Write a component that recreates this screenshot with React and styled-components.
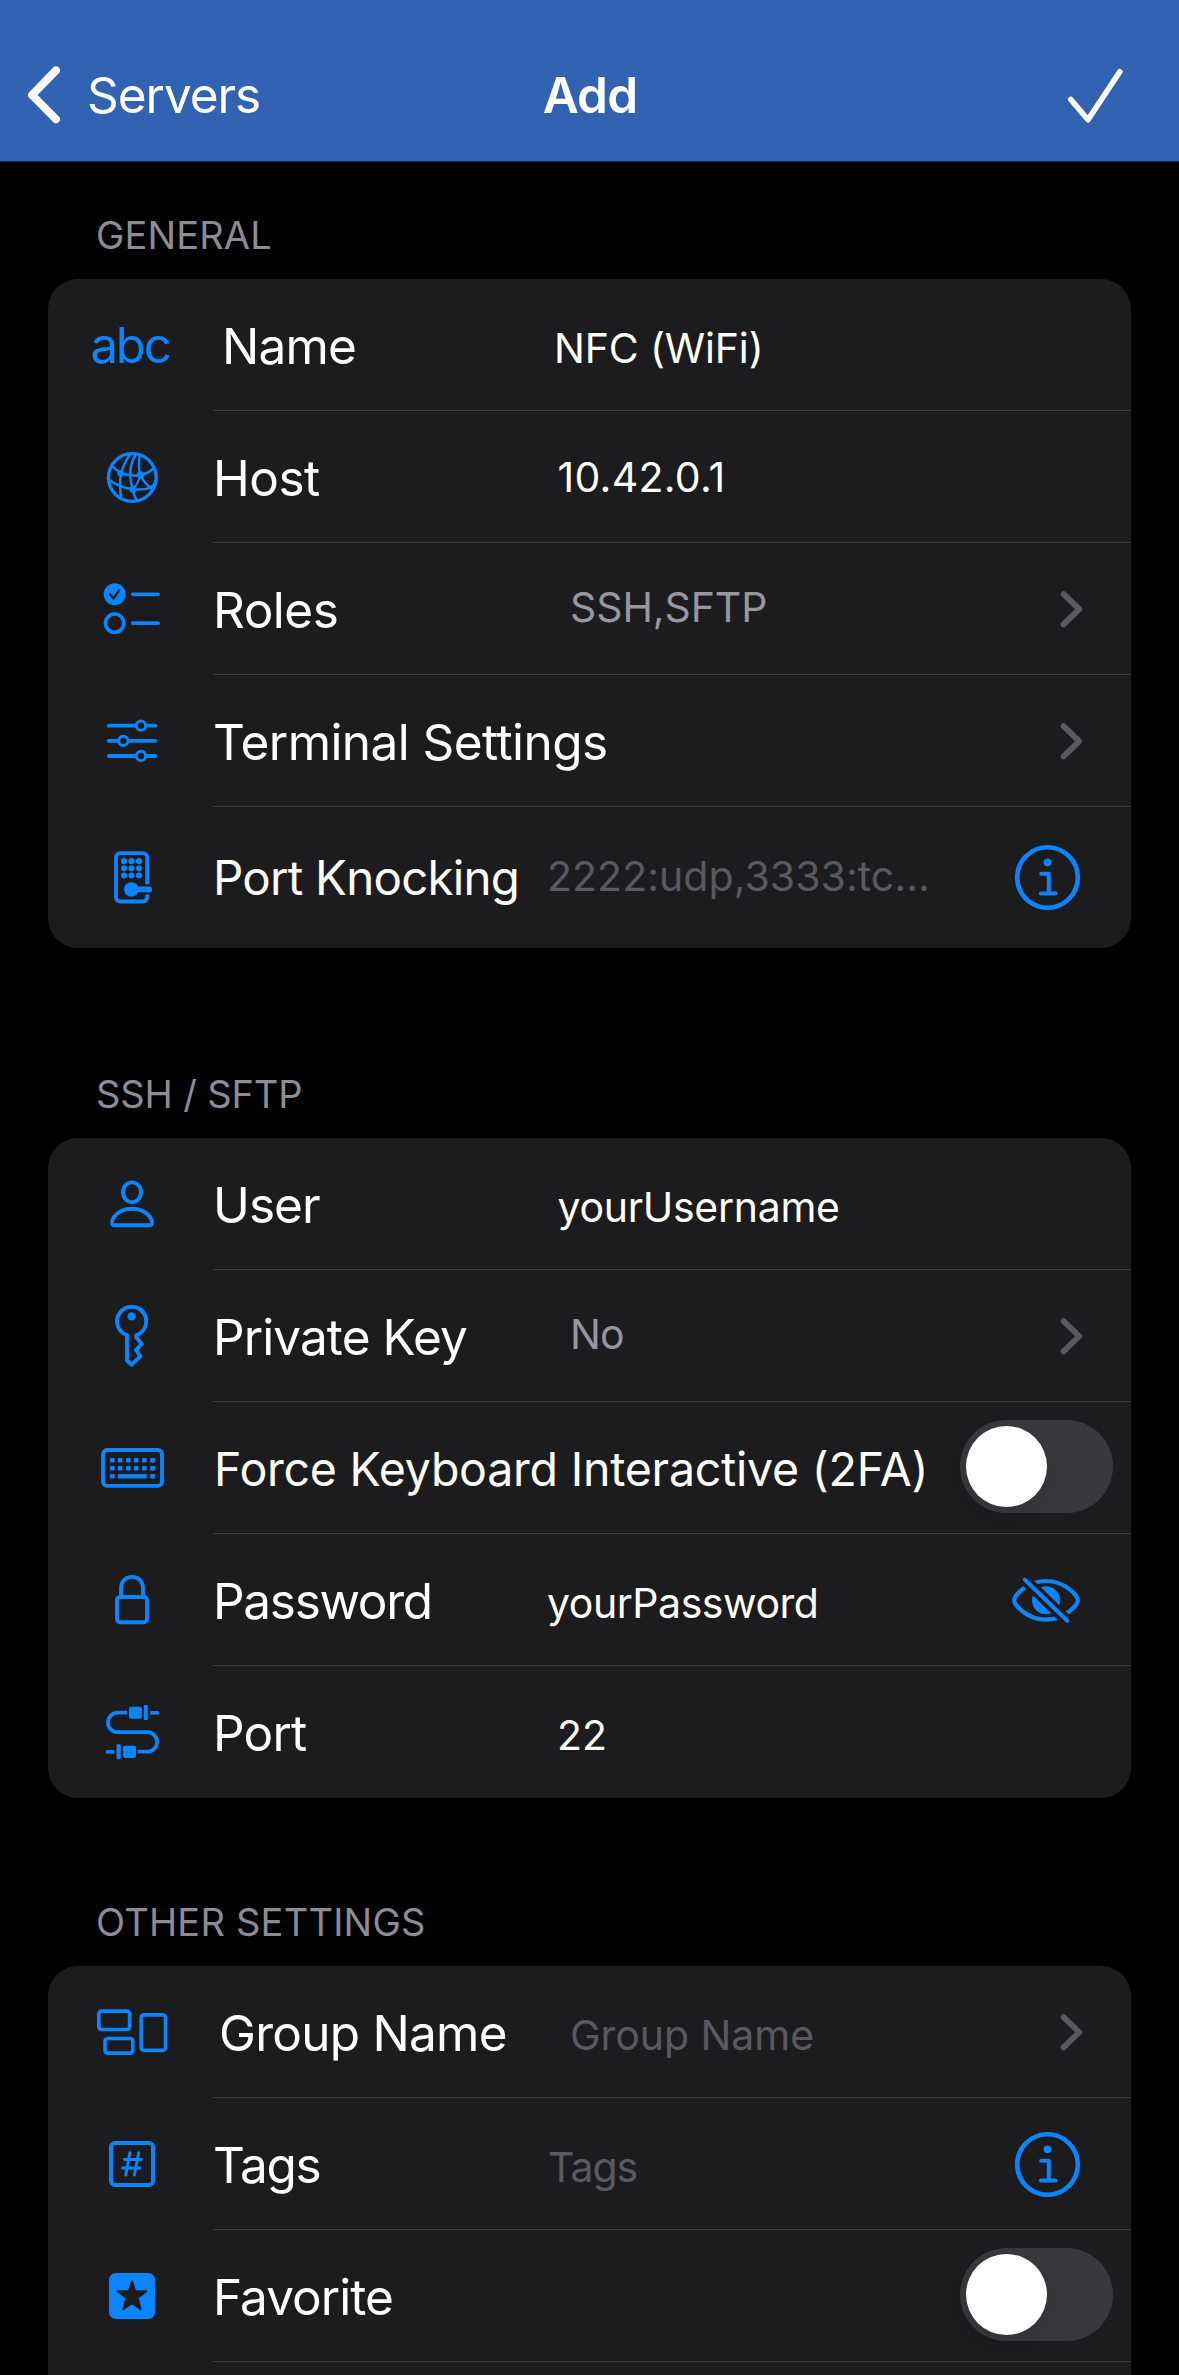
import React from "react";
import styled, { createGlobalStyle } from "styled-components";

const BLUE = "#0a84ff";
const CARD = "#1c1c1e";

const GlobalStyle = createGlobalStyle`
  *, *::before, *::after { box-sizing: border-box; }
  body {
    margin: 0;
    background: #000;
    font-family: Inter, "Liberation Sans", sans-serif;
    color: #fff;
  }
`;

const Page = styled.div`
  width: 1179px;
  height: 2375px;
  overflow: hidden;
  background: #000;
`;

/* ---------- navigation bar ---------- */

const NavBar = styled.header`
  display: grid;
  grid-template-columns: 1fr auto 1fr;
  align-items: center;
  height: 162px;
  padding: 29px 53px 0 23px;
  border-bottom: 1px solid #14243f;
  background: #3262b2;
`;

const BackButton = styled.div`
  display: flex;
  align-items: center;
  gap: 22px;
  font-size: 49.5px;
  line-height: 60px;
  letter-spacing: -1.05px;
`;

const NavTitle = styled.h1`
  margin: 0 0 0 31px;
  font-size: 49.5px;
  line-height: 60px;
  font-weight: 600;
  letter-spacing: -0.78px;
`;

const NavAction = styled.div`
  display: flex;
  justify-content: flex-end;
`;

/* ---------- grouped list ---------- */

const Section = styled.section`
  padding: ${(p) => p.$top}px 48px 0;
`;

const SectionTitle = styled.h2`
  margin: 0 0 21px 48px;
  font-size: 38px;
  line-height: 46px;
  font-weight: 400;
  letter-spacing: ${(p) => p.$track || 0}px;
  color: #8d8b93;
`;

const Card = styled.div`
  overflow: hidden;
  border-radius: 30px;
  background: ${CARD};
`;

const RowBox = styled.div`
  display: flex;
  height: ${(p) => p.$height || 132}px;
`;

const IconCell = styled.div`
  display: flex;
  flex: 0 0 165px;
  align-items: center;
  justify-content: center;
  padding-left: 3px;
  color: ${BLUE};
`;

const AbcGlyph = styled.span`
  padding: 2px 4px 0 0;
  font-size: 49px;
  line-height: 60px;
  letter-spacing: -2.2px;
`;

const RowBody = styled.div`
  display: flex;
  flex: 1;
  align-items: center;
  min-width: 0;
  padding-right: ${(p) => p.$right || 50}px;
  border-bottom: 1px solid ${(p) => (p.$last ? "transparent" : "#3b3b3d")};
`;

const Label = styled.div`
  flex: 0 0 ${(p) => (p.$wide ? "auto" : "333px")};
  padding: ${(p) => (p.$size ? 2 : 3)}px 0 0 ${(p) => p.$inset || 0}px;
  font-size: ${(p) => p.$size || 49.5}px;
  line-height: 60px;
  letter-spacing: ${(p) => p.$track || 0}px;
  white-space: nowrap;
`;

const tones = { text: "#fff", secondary: "#98969e", placeholder: "#5a595f" };

const Value = styled.div`
  flex: 1;
  padding-left: ${(p) => p.$inset || 0}px;
  padding-top: ${(p) => Math.max(0, (p.$drop || 0) * 2)}px;
  padding-bottom: ${(p) => Math.max(0, (p.$drop || 0) * -2)}px;
  font-size: 41px;
  line-height: 50px;
  letter-spacing: ${(p) => p.$track || 0}px;
  white-space: nowrap;
  color: ${(p) => tones[p.$tone || "text"]};
`;

const Accessory = styled.div`
  display: flex;
  flex: none;
  margin-left: auto;
  color: ${(p) => (p.$muted ? "#5a595f" : BLUE)};
`;

const Track = styled.div`
  display: flex;
  align-items: center;
  width: 153px;
  height: 93px;
  margin-bottom: 2px;
  padding: 0 6px;
  border-radius: 47px;
  background: #39383d;
`;

const Knob = styled.div`
  width: 81px;
  height: 81px;
  border-radius: 50%;
  background: #fff;
  box-shadow: 0 6px 18px rgba(0, 0, 0, 0.12);
`;

const Toggle = () => (
  <Track>
    <Knob />
  </Track>
);

/* ---------- icons ---------- */

const Glyph = styled.svg`
  display: block;
  width: 72px;
  height: 72px;
  fill: none;
  stroke: currentColor;
  stroke-linecap: round;
  stroke-linejoin: round;
`;

const BackChevron = () => (
  <svg width="42" height="60" viewBox="24 65 42 60" fill="none" stroke="#fff" strokeWidth="8" strokeLinecap="round" strokeLinejoin="round">
    <path d="M57 70.4 33 95l24 24.2" />
  </svg>
);

const CheckMark = () => (
  <svg width="62" height="62" viewBox="1064 64 62 62" fill="none" stroke="#fff" strokeWidth="5.6" strokeLinecap="round" strokeLinejoin="round">
    <path d="M1070.8 99.5 1088 119.8 1119.8 71.8" />
  </svg>
);

const Chevron = () => (
  <svg width="23" height="42" viewBox="1058 588 23 42" overflow="visible" fill="none" stroke="currentColor" strokeWidth="5.8" strokeLinecap="round" strokeLinejoin="round">
    <path d="M1062.6 594.2 1078.2 609.2 1062.6 624.4" />
  </svg>
);

const InfoIcon = () => (
  <svg width="66" height="66" viewBox="-32.5 -33.5 66 66" fill="none" stroke="currentColor" strokeLinecap="round" strokeLinejoin="round">
    <circle r="30.3" strokeWidth="4.6" />
    <circle cy="-15.2" r="3.9" fill="currentColor" stroke="none" />
    <path d="M-6.3-3.8H1.3V16M-6.6 16H8" strokeWidth="4" />
  </svg>
);

const EyeSlashIcon = () => (
  <svg width="70" height="50" viewBox="1011 1575 70 50" fill="none" stroke="currentColor" strokeLinecap="round" strokeLinejoin="round">
    <path d="M1014.2 1600.3C1014.2 1595 1028 1581 1046 1581S1077.8 1595 1077.8 1600.3 1064 1619.7 1046 1619.7 1014.2 1605.6 1014.2 1600.3Z" strokeWidth="4.2" />
    <circle cx="1046" cy="1600.3" r="14" fill="currentColor" stroke="none" />
    <path d="M1024.8 1579.6 1067.2 1620.8" stroke={CARD} strokeWidth="11.5" strokeLinecap="butt" />
    <path d="M1024.8 1579.6 1067.2 1620.8" strokeWidth="4" />
  </svg>
);

const GlobeIcon = () => (
  <Glyph viewBox="48 33 216 216" strokeWidth="7.5">
    <circle cx="157" cy="142.5" r="71.5" strokeWidth="10" />
    <path d="M150 74Q132 98 123 130Q117 165 124 206" />
    <path d="M166 75Q149 105 151 138Q152 160 158 178Q161 196 171 211" />
    <path d="M179 77Q174 110 181 135Q193 160 214 175" />
    <path d="M182 134Q176 156 160 178" strokeWidth="6" />
    <path d="M97 108Q108 121 123 129Q152 140 182 135Q204 131 222 114" />
    <path d="M88 150Q118 172 158 178Q190 181 214 172Q222 166 228 152" />
    <g fill="currentColor" stroke="none">
      <circle cx="122" cy="130" r="10" />
      <circle cx="182" cy="135" r="11" />
      <circle cx="159" cy="178" r="11" />
      <circle cx="214" cy="173" r="7" />
    </g>
  </Glyph>
);

const ChecklistIcon = () => (
  <Glyph viewBox="48 429 216 216" strokeWidth="11">
    <circle cx="104" cy="493" r="33" fill="currentColor" stroke="none" />
    <path d="M91 494 100.500 505.500 117 481" stroke={CARD} strokeWidth="7" />
    <circle cx="104" cy="579.500" r="27.500" />
    <path d="M158.500 493H234.500M158.500 579.500H234.500" />
  </Glyph>
);

const SlidersIcon = () => (
  <Glyph viewBox="48 825 216 216" strokeWidth="11.5">
    <path d="M86.500 887H225.500M86.500 932.500H225.500M86.500 978H225.500" />
    <g fill={CARD} strokeWidth="9">
      <circle cx="183" cy="887" r="14" />
      <circle cx="130" cy="932.500" r="14" />
      <circle cx="183" cy="978" r="14" />
    </g>
  </Glyph>
);

const KeypadIcon = () => (
  <Glyph viewBox="48 1234.500 216 216" strokeWidth="11.500">
    <path d="M201.500 1361V1282Q201.500 1268 187.500 1268H122Q108 1268 108 1282V1399Q108 1413 122 1413H187.500Q201.500 1413 201.500 1399V1392" strokeLinecap="butt" />
    <g fill="currentColor" stroke="none">
      {[1292, 1313.5, 1335].map((y) =>
        [132, 154.5, 177].map((x) => <circle key={`${x}-${y}`} cx={x} cy={y} r="9.2" />)
      )}
      <circle cx="154" cy="1377" r="22" />
      <rect x="154" y="1368" width="62" height="17.500" rx="8.700" />
    </g>
  </Glyph>
);

const PersonIcon = () => (
  <Glyph viewBox="96 1168 72 72" strokeWidth="3.9">
    <ellipse cx="132" cy="1192.300" rx="9" ry="9.900" />
    <path d="M114.500 1225.200C111.800 1225.200 111.500 1223 112.300 1220.500C114.300 1214.200 121.500 1208.800 132 1208.800S149.700 1214.200 151.700 1220.500C152.500 1223 152.200 1225.200 149.500 1225.200Z" />
  </Glyph>
);

const KeyIcon = () => (
  <Glyph viewBox="96 1300 72 72" strokeWidth="3.9">
    <path d="M127 1335.200A14.600 14.600 0 1 1 136.300 1335.200V1337.500L141.800 1343.900 136 1350 140.300 1356.300 131.700 1364.700 127 1360.500Z" />
    <circle cx="131.600" cy="1316.400" r="4.200" fill="currentColor" stroke="none" />
  </Glyph>
);

const KeyboardIcon = () => (
  <Glyph viewBox="96 1432 72 72" strokeWidth="3.9">
    <rect x="103" y="1450" width="59" height="35.900" rx="4.200" />
    <g fill="currentColor" stroke="none">
      {[1458, 1466].map((y) =>
        [110, 117.8, 126, 133.9, 142.1, 150.2].map((x) => (
          <rect key={`${x}-${y}`} x={x} y={y} width="4.600" height="4.600" rx="0.800" />
        ))
      )}
      <rect x="110" y="1474" width="4.600" height="4.600" rx="0.800" />
      <rect x="117.800" y="1474" width="29" height="4.600" rx="1" />
      <rect x="150.200" y="1474" width="4.600" height="4.600" rx="0.800" />
    </g>
  </Glyph>
);

const LockIcon = () => (
  <Glyph viewBox="96 1564 72 72" strokeWidth="3.9">
    <rect x="117" y="1597" width="30" height="25.200" rx="3" />
    <path d="M121 1597V1588.500C121 1581.500 125.500 1576.900 132 1576.900S143 1581.500 143 1588.500V1597" />
  </Glyph>
);

const CableIcon = () => (
  <Glyph viewBox="96 1696 72 72" strokeWidth="3.800">
    <path d="M127 1712.700H117.700A9.700 9.700 0 0 0 117.700 1732.200H147.300A9.700 9.700 0 0 1 147.300 1751.700H138" strokeLinecap="butt" />
    <g fill="currentColor" stroke="none">
      <rect x="128.900" y="1706.700" width="13" height="12" rx="1.800" />
      <rect x="143.800" y="1705" width="4" height="15" rx="1.200" />
      <rect x="150.200" y="1711" width="8.800" height="3.700" rx="1" />
      <rect x="123" y="1745.700" width="13" height="12.200" rx="1.800" />
      <rect x="116.500" y="1744.300" width="4.200" height="15" rx="1.200" />
      <rect x="106" y="1750" width="8.300" height="3.700" rx="1" />
    </g>
  </Glyph>
);

const GroupIcon = () => (
  <Glyph viewBox="48 18 216 216" strokeWidth="11">
    <rect x="56.500" y="63.500" width="92.500" height="55" rx="8" />
    <rect x="75" y="145.500" width="83.500" height="44" rx="8" />
    <rect x="183.500" y="74.500" width="73" height="106.500" rx="8" />
  </Glyph>
);

const HashIcon = () => (
  <Glyph viewBox="48 414 216 216" strokeWidth="12">
    <rect x="93" y="459" width="126" height="126" rx="12" />
    <path d="M149.500 488 137 555.500M176 488 163 555.500M133.500 508.500H184M127.500 534H180" strokeWidth="8.5" />
  </Glyph>
);

const StarIcon = () => (
  <Glyph viewBox="48 810 216 216">
    <rect x="87" y="849" width="138" height="138" rx="20" fill="currentColor" stroke="none" />
    <path
      d="M156 874.500 165.800 904H198.500L172.500 923.500 182 957.500 156 938.500 130 957.500 139.500 923.500 113.500 904H146.200Z"
      fill={CARD}
      stroke={CARD}
      strokeWidth="6"
    />
  </Glyph>
);

/* ---------- row ---------- */

const Row = ({ icon, label, value, accessory, muted, right, height, last }) => (
  <RowBox $height={height}>
    <IconCell>{icon}</IconCell>
    <RowBody $right={right} $last={last}>
      <Label $inset={label.inset} $track={label.track} $size={label.size} $wide={!value}>
        {label.text}
      </Label>
      {value && (
        <Value $inset={value.inset} $track={value.track} $drop={value.drop} $tone={value.tone}>
          {value.text}
        </Value>
      )}
      {accessory && <Accessory $muted={muted}>{accessory}</Accessory>}
    </RowBody>
  </RowBox>
);

export default function App() {
  return (
    <Page>
      <GlobalStyle />
      <NavBar>
        <BackButton>
          <BackChevron />
          Servers
        </BackButton>
        <NavTitle>Add</NavTitle>
        <NavAction>
          <CheckMark />
        </NavAction>
      </NavBar>

      <Section $top={50}>
        <SectionTitle $track={0.14}>GENERAL</SectionTitle>
        <Card>
          <Row
            icon={<AbcGlyph>abc</AbcGlyph>}
            label={{ text: "Name", inset: 9, track: -0.82 }}
            value={{ text: "NFC (WiFi)", inset: 8, track: -0.15, drop: 3 }}
          />
          <Row
            icon={<GlobeIcon />}
            label={{ text: "Host", track: -0.5 }}
            value={{ text: "10.42.0.1", inset: 11.5, track: 0.3, drop: 0.5 }}
          />
          <Row
            icon={<ChecklistIcon />}
            label={{ text: "Roles", track: -0.5 }}
            value={{ text: "SSH,SFTP", inset: 24, drop: -1.5, track: -0.1, tone: "secondary" }}
            accessory={<Chevron />}
            right={49}
            muted
          />
          <Row
            icon={<SlidersIcon />}
            label={{ text: "Terminal Settings", track: -0.57 }}
            accessory={<Chevron />}
            right={49}
            muted
          />
          <Row
            icon={<KeypadIcon />}
            label={{ text: "Port Knocking", size: 47.5, track: -0.8 }}
            value={{ text: "2222:udp,3333:tc...", inset: 1, track: 0.05, drop: -1.5, tone: "placeholder" }}
            accessory={<InfoIcon />}
            height={141}
            last
          />
        </Card>
      </Section>

      <Section $top={123}>
        <SectionTitle $track={-0.13}>SSH / SFTP</SectionTitle>
        <Card>
          <Row
            icon={<PersonIcon />}
            label={{ text: "User", track: -0.94 }}
            value={{ text: "yourUsername", inset: 11.5, track: -0.3, drop: 3 }}
          />
          <Row
            icon={<KeyIcon />}
            label={{ text: "Private Key", track: -0.91 }}
            value={{ text: "No", inset: 24, track: -0.89, drop: -1.5, tone: "secondary" }}
            accessory={<Chevron />}
            right={49}
            muted
          />
          <Row
            icon={<KeyboardIcon />}
            label={{ text: "Force Keyboard Interactive (2FA)", inset: 1, size: 46.5, track: -0.23 }}
            accessory={<Toggle />}
            right={18}
          />
          <Row
            icon={<LockIcon />}
            label={{ text: "Password", track: -1.3 }}
            value={{ text: "yourPassword", inset: 1, track: -0.45, drop: 3 }}
            accessory={<EyeSlashIcon />}
          />
          <Row
            icon={<CableIcon />}
            label={{ text: "Port", track: -0.81 }}
            value={{ text: "22", inset: 11, drop: 3 }}
            last
          />
        </Card>
      </Section>

      <Section $top={101}>
        <SectionTitle $track={0.22}>OTHER SETTINGS</SectionTitle>
        <Card>
          <Row
            icon={<GroupIcon />}
            label={{ text: "Group Name", inset: 6, track: -0.75 }}
            value={{ text: "Group Name", inset: 24, track: -0.05, drop: 3, tone: "placeholder" }}
            accessory={<Chevron />}
            right={49}
            muted
          />
          <Row
            icon={<HashIcon />}
            label={{ text: "Tags", track: -1.29 }}
            value={{ text: "Tags", inset: 2, track: -1.04, drop: 3.5, tone: "placeholder" }}
            accessory={<InfoIcon />}
          />
          <Row
            icon={<StarIcon />}
            label={{ text: "Favorite", track: -0.95 }}
            accessory={<Toggle />}
            right={18}
          />
          <RowBox />
        </Card>
      </Section>
    </Page>
  );
}
